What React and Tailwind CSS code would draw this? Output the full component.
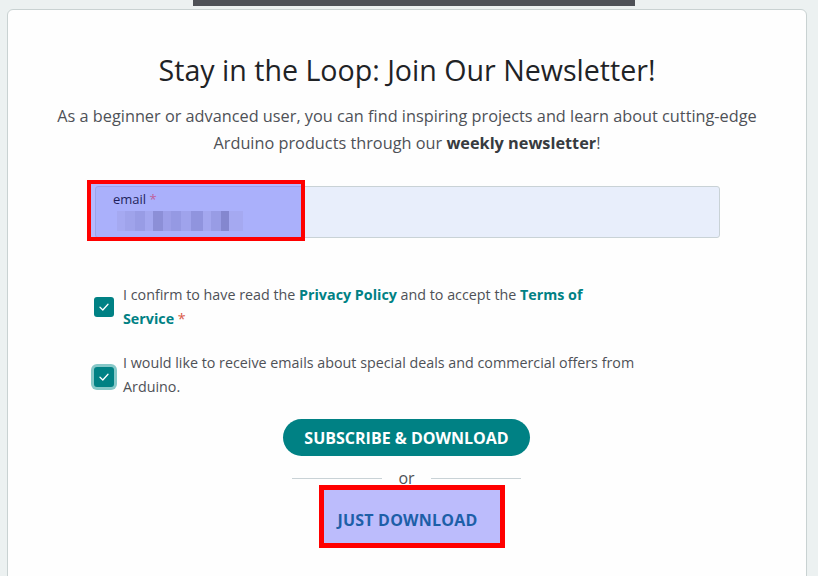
import React from "react";

function Check() {
  return (
    <svg width="12" height="12" viewBox="0 0 12 12" fill="none">
      <path d="M2 6.3 L4.8 9 L10 3.2" stroke="white" strokeWidth="1.3" strokeLinecap="round" strokeLinejoin="round" />
    </svg>
  );
}

const blocks = [
  ["#a3a7ec", 8], ["#9a9ee4", 10], ["#9094dc", 10], ["#a0a4ea", 8], ["#7f82c8", 10], ["#9599e0", 8],
  ["#8c90d8", 10], ["#9a9ee5", 10], ["#8589d1", 12], ["#a0a4ea", 8], ["#9094dc", 10], ["#7376bc", 8], ["#a3a7ec", 14],
];

export default function App() {
  return (
    <div className="min-h-[576px] w-[818px] overflow-hidden bg-[#ecf1f1] relative" style={{ fontFamily: '"Open Sans", sans-serif' }}>
      <div className="flex justify-center">
        <div className="ml-[10px] h-[6px] w-[442px] bg-[#4e5157]" />
      </div>
      <div className="ml-[7px] mt-[3px] w-[800px] h-[600px] rounded-[6px] border border-[#c9d2d2] bg-[#fefefe] flex flex-col items-center">
        <h1 className="mt-[40px] text-[28.6px] leading-[40px] text-[#1f2326] font-normal">Stay in the Loop: Join Our Newsletter!</h1>
        <p className="mt-[13px] text-[16.3px] leading-[27px] text-[#4e5157] text-center w-[740px]">
          As a beginner or advanced user, you can find inspiring projects and learn about cutting-edge Arduino products through our <b className="font-bold text-[#373b40]">weekly newsletter</b>!
        </p>
        <div className="mt-[29px] ml-[1px] w-[625px] relative">
          <div className="h-[52px] rounded-[3px] border border-[#c9d2d6] bg-[#e8eefb]" />
          <div className="absolute left-[-8px] top-[-6px] w-[218px] h-[61px] border-[4px] border-[#ff0000] bg-[rgba(108,114,251,0.5)]">
            <div className="ml-[22px] mt-[7px] text-[13px] leading-[16px] text-[#1e1f5c]">
              email <span className="text-[#c0609a]">*</span>
            </div>
            <div className="ml-[26px] mt-[4px] flex h-[20px]">
              {blocks.map(([c, w], i) => (
                <div key={i} style={{ background: c, width: w, opacity: 0.7 }} className="h-[20px]" />
              ))}
            </div>
          </div>
        </div>
        <div className="mt-[45px] w-[625px] ml-[-1px] flex flex-col gap-[20px] text-[14.3px] leading-[24px] text-[#4e5157]">
          <div className="flex items-center gap-[9px]">
            <div className="w-[20px] h-[20px] rounded-[3px] bg-[#008184] flex items-center justify-center shrink-0 mt-[-1px]">
              <Check />
            </div>
            <div className="w-[490px]">
              I confirm to have read the <b className="text-[#008184] font-bold">Privacy Policy</b> and to accept the <b className="text-[#008184] font-bold">Terms of Service</b> <span className="text-[#da5b4a]">*</span>
            </div>
          </div>
          <div className="flex items-center gap-[9px]">
            <div className="w-[20px] h-[20px] rounded-[3px] bg-[#008184] ring-[3px] ring-[#86c8c8] flex items-center justify-center shrink-0 mt-[4px]">
              <Check />
            </div>
            <div className="w-[525px]">
              I would like to receive emails about special deals and commercial offers from Arduino.
            </div>
          </div>
        </div>
        <button className="mt-[20px] ml-[-1px] h-[37px] w-[247px] rounded-full bg-[#008184] text-white font-bold text-[16px] tracking-[0px] uppercase">
          Subscribe &amp; Download
        </button>
        <div className="mt-[13px] ml-[-1px] flex items-center w-[229px]">
          <div className="h-px flex-1 bg-[#c9d2d6]" />
          <span className="px-[16px] text-[16px] leading-[18px] text-[#4e5157]">or</span>
          <div className="h-px flex-1 bg-[#c9d2d6]" />
        </div>
        <div className="mt-[-2px] ml-[9px] w-[186px] h-[63px] border-[5px] border-[#ff0000] bg-[#bcbcfc] flex items-center pl-[14px] pt-[6px]">
          <span className="font-bold text-[16px] text-[#1d5fa8] tracking-[0.2px]">JUST DOWNLOAD</span>
        </div>
      </div>
    </div>
  );
}
